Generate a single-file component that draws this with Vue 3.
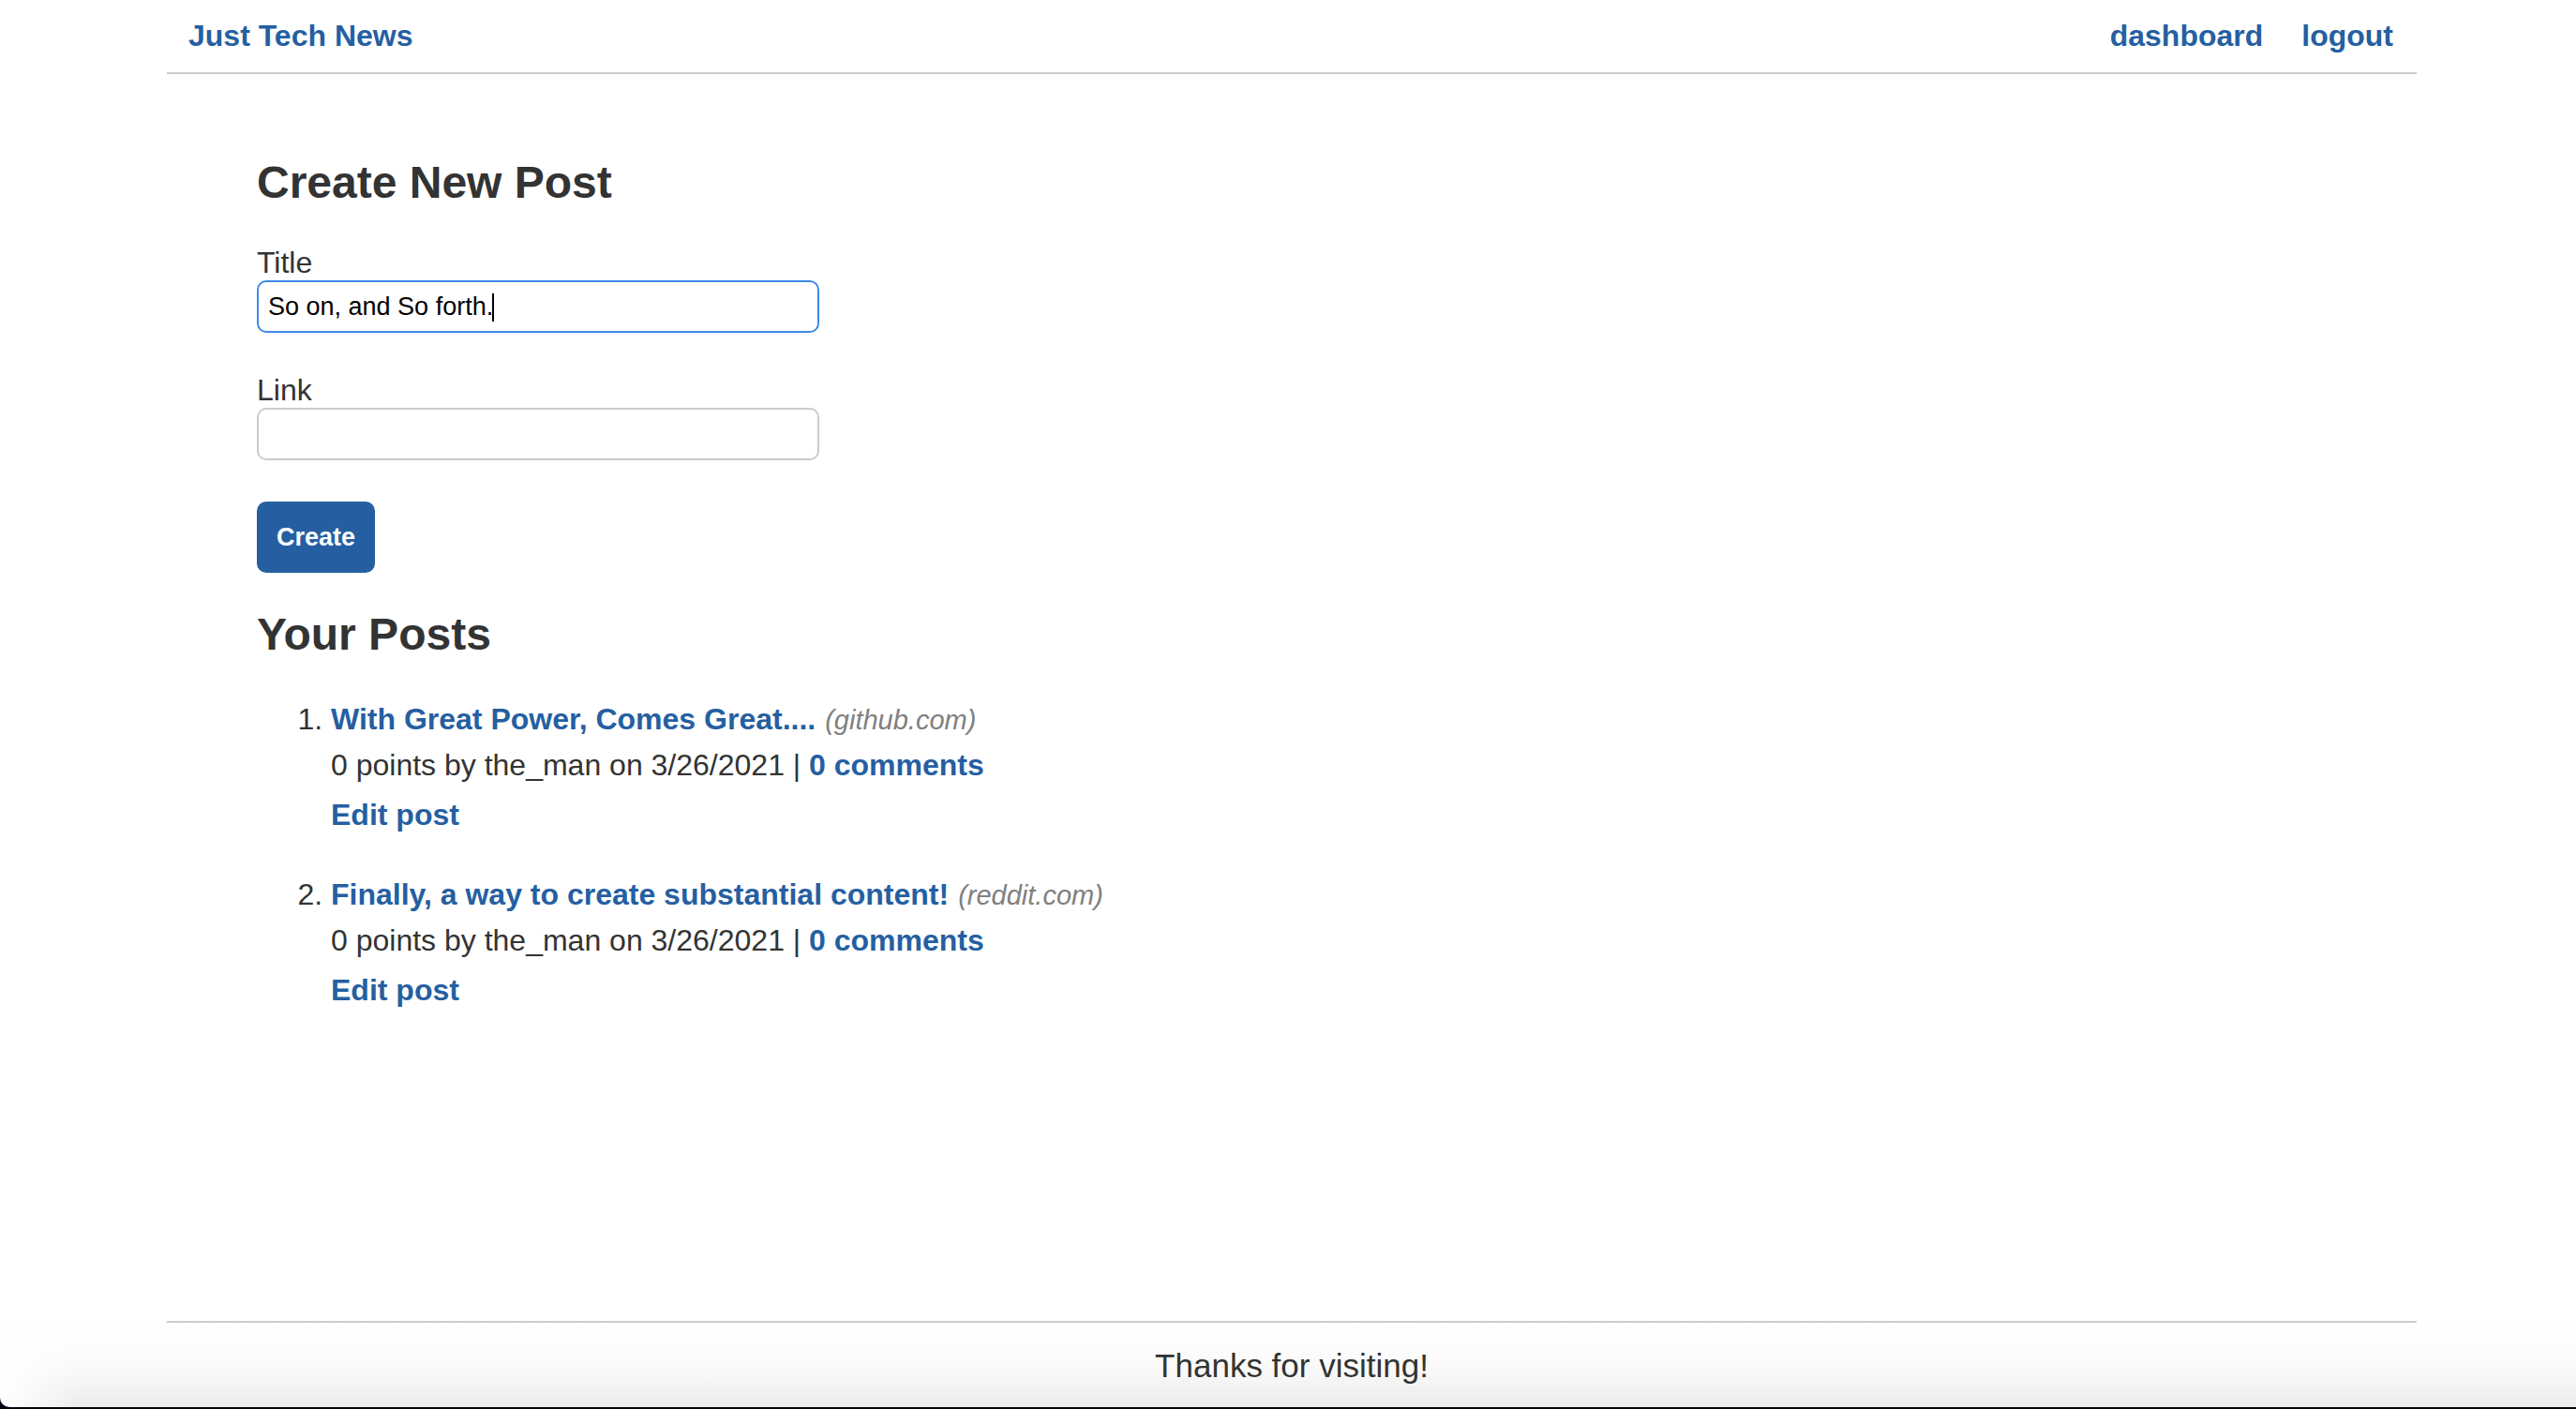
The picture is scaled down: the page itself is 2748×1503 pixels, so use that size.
<script setup>
import { ref } from 'vue'

const title = ref('So on, and So forth.')
const link = ref('')

const posts = [
  {
    id: 1,
    title: 'With Great Power, Comes Great....',
    host: 'github.com',
    author: 'the_man',
    date: '3/26/2021'
  },
  {
    id: 2,
    title: 'Finally, a way to create substantial content!',
    host: 'reddit.com',
    author: 'the_man',
    date: '3/26/2021'
  }
]
</script>

<template>
  <div class="page">
    <header class="wrap header">
      <a class="link" href="#">Just Tech News</a>
      <nav class="nav">
        <a class="link" href="#dashboard">dashboard</a>
        <a class="link" href="#logout">logout</a>
      </nav>
    </header>

    <main class="wrap main">
      <h2>Create New Post</h2>
      <form class="form" @submit.prevent>
        <div class="field">
          <label for="post-title">Title</label>
          <div class="control">
            <input id="post-title" v-model="title" class="active" type="text" />
            <span class="caret" aria-hidden="true"></span>
          </div>
        </div>
        <div class="field">
          <label for="post-link">Link</label>
          <div class="control">
            <input id="post-link" v-model="link" type="text" />
          </div>
        </div>
        <button type="submit">Create</button>
      </form>

      <h2>Your Posts</h2>
      <ol class="posts">
        <li v-for="post in posts" :key="post.id">
          <div>
            <a class="link" href="#">{{ post.title }}</a>
            <span class="host">({{ post.host }})</span>
          </div>
          <div>
            0 points by {{ post.author }} on {{ post.date }} |
            <a class="link" href="#">0 comments</a>
          </div>
          <div class="edit"><a class="link" href="#">Edit post</a></div>
        </li>
      </ol>
    </main>

    <footer class="wrap footer">Thanks for visiting!</footer>
  </div>
</template>

<style>
body {
  background: #05020f;
}
</style>

<style scoped>
.page {
  box-sizing: border-box;
  display: flex;
  flex-direction: column;
  min-height: calc(100vh - 2px);
  padding-left: 8px;
  border-bottom-left-radius: 10px;
  background:
    linear-gradient(to right, #fff, rgba(255, 255, 255, 0)) left bottom / 90px 92px no-repeat,
    linear-gradient(to bottom, #fff 0%, #fdfdfd 30%, #f8f8f8 60%, #ebebeb 100%) left bottom / 100% 92px no-repeat,
    #fff;
  color: #333;
  font-family: "Liberation Sans", Arial, Helvetica, sans-serif;
  font-size: 32px;
  line-height: 48px;
}

.wrap {
  box-sizing: border-box;
  width: 100%;
  max-width: 2400px;
  margin: 0 auto;
}

.link {
  color: #255fa2;
  font-weight: bold;
  text-decoration: none;
}

.header {
  display: flex;
  justify-content: space-between;
  padding: 14px 25px 15px 23px;
  border-bottom: 2px solid #ccc;
}

.nav {
  display: flex;
  gap: 41px;
}

.main {
  flex: 1;
  padding: 80px 96px 0;
}

h2 {
  margin: 0 0 30px;
  font-size: 48px;
  line-height: 72px;
}

.form {
  margin-bottom: 30px;
}

.field {
  max-width: 600px;
  margin-bottom: 42px;
}

label {
  display: block;
  line-height: 38px;
}

.control {
  position: relative;
  display: flex;
}

input {
  box-sizing: border-box;
  width: 100%;
  height: 56px;
  padding: 0 10px;
  border: 2px solid #ccc;
  border-radius: 10px;
  outline: none;
  background: #fff;
  color: #000;
  font-family: inherit;
  font-size: 27px;
}

input.active {
  border-color: #3b8ae6;
}

.caret {
  position: absolute;
  top: 14px;
  left: 251px;
  width: 2px;
  height: 30px;
  background: #000;
}

button {
  display: block;
  height: 76px;
  margin-top: 44px;
  padding: 0 21px;
  border: 0;
  border-radius: 10px;
  background: #255fa2;
  color: #fff;
  font-family: inherit;
  font-size: 27px;
  font-weight: bold;
}

.posts {
  margin: 0;
  padding-left: 79px;
}

.posts li {
  margin-bottom: 37px;
}

.host {
  margin-left: 10px;
  color: #808080;
  font-size: 29px;
  font-style: italic;
}

.edit {
  margin-top: 5px;
}

.footer {
  padding: 20px 0 18px;
  border-top: 2px solid #ccc;
  font-size: 35px;
  line-height: 52px;
  text-align: center;
}
</style>
